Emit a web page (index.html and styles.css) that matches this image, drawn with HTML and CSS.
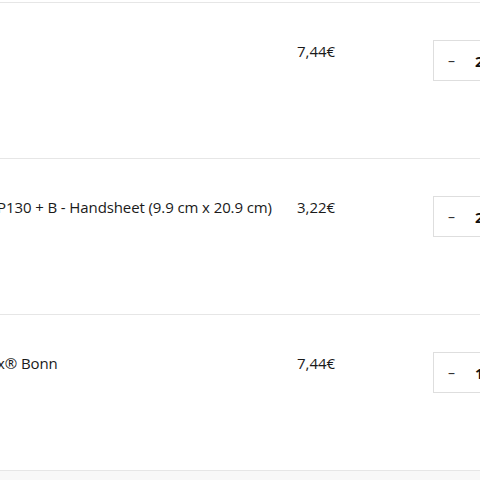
FILE: index.html
```html
<!DOCTYPE html>
<html>
<head>
<meta charset="utf-8">
<link rel="stylesheet" href="styles.css">
</head>
<body>
<div class="cart">
  <div class="row">
    <div class="name"></div>
    <div class="price">7,44€</div>
    <div class="qty"><span class="minus">–</span><span class="count">2</span></div>
  </div>
  <div class="row">
    <div class="name"><span class="name-text">P130 + B - Handsheet (9.9 cm x 20.9 cm)</span></div>
    <div class="price">3,22€</div>
    <div class="qty"><span class="minus">–</span><span class="count">2</span></div>
  </div>
  <div class="row">
    <div class="name"><span class="name-text">x® Bonn</span></div>
    <div class="price">7,44€</div>
    <div class="qty"><span class="minus">–</span><span class="count">1</span></div>
  </div>
</div>
<div class="footer"></div>
</body>
</html>
```
FILE: styles.css
```css
html, body {
  margin: 0;
  padding: 0;
  background: #ffffff;
  overflow: hidden;
}
body {
  font-family: "Open Sans", "Liberation Sans", sans-serif;
  font-size: 15px;
  color: #1a1a1a;
  width: 480px;
  height: 480px;
}
.cart {
  margin-top: 2px;
  border-top: 1px solid #e6e6e6;
}
.row {
  display: flex;
  align-items: flex-start;
  height: 156px;
  box-sizing: border-box;
  padding-top: 37px;
  border-bottom: 1px solid #e6e6e6;
  background: #fff;
}
.name {
  width: 297px;
  flex: none;
  padding-top: 1px;
  line-height: 20px;
  white-space: nowrap;
}
.name-text {
  display: inline-block;
  margin-left: -3px;
  letter-spacing: -0.1px;
}
.price {
  width: 136px;
  flex: none;
  padding-top: 1px;
  line-height: 20px;
}
.qty {
  flex: none;
  width: 120px;
  height: 41px;
  box-sizing: border-box;
  border: 1px solid #dedede;
  display: flex;
  align-items: center;
  padding-left: 14px;
  gap: 20px;
}
.minus {
  font-size: 14px;
  color: #333;
}
.count {
  font-weight: 700;
  font-size: 15px;
  color: #111;
}
.footer {
  height: 20px;
  background: #f8f8f8;
}
```
